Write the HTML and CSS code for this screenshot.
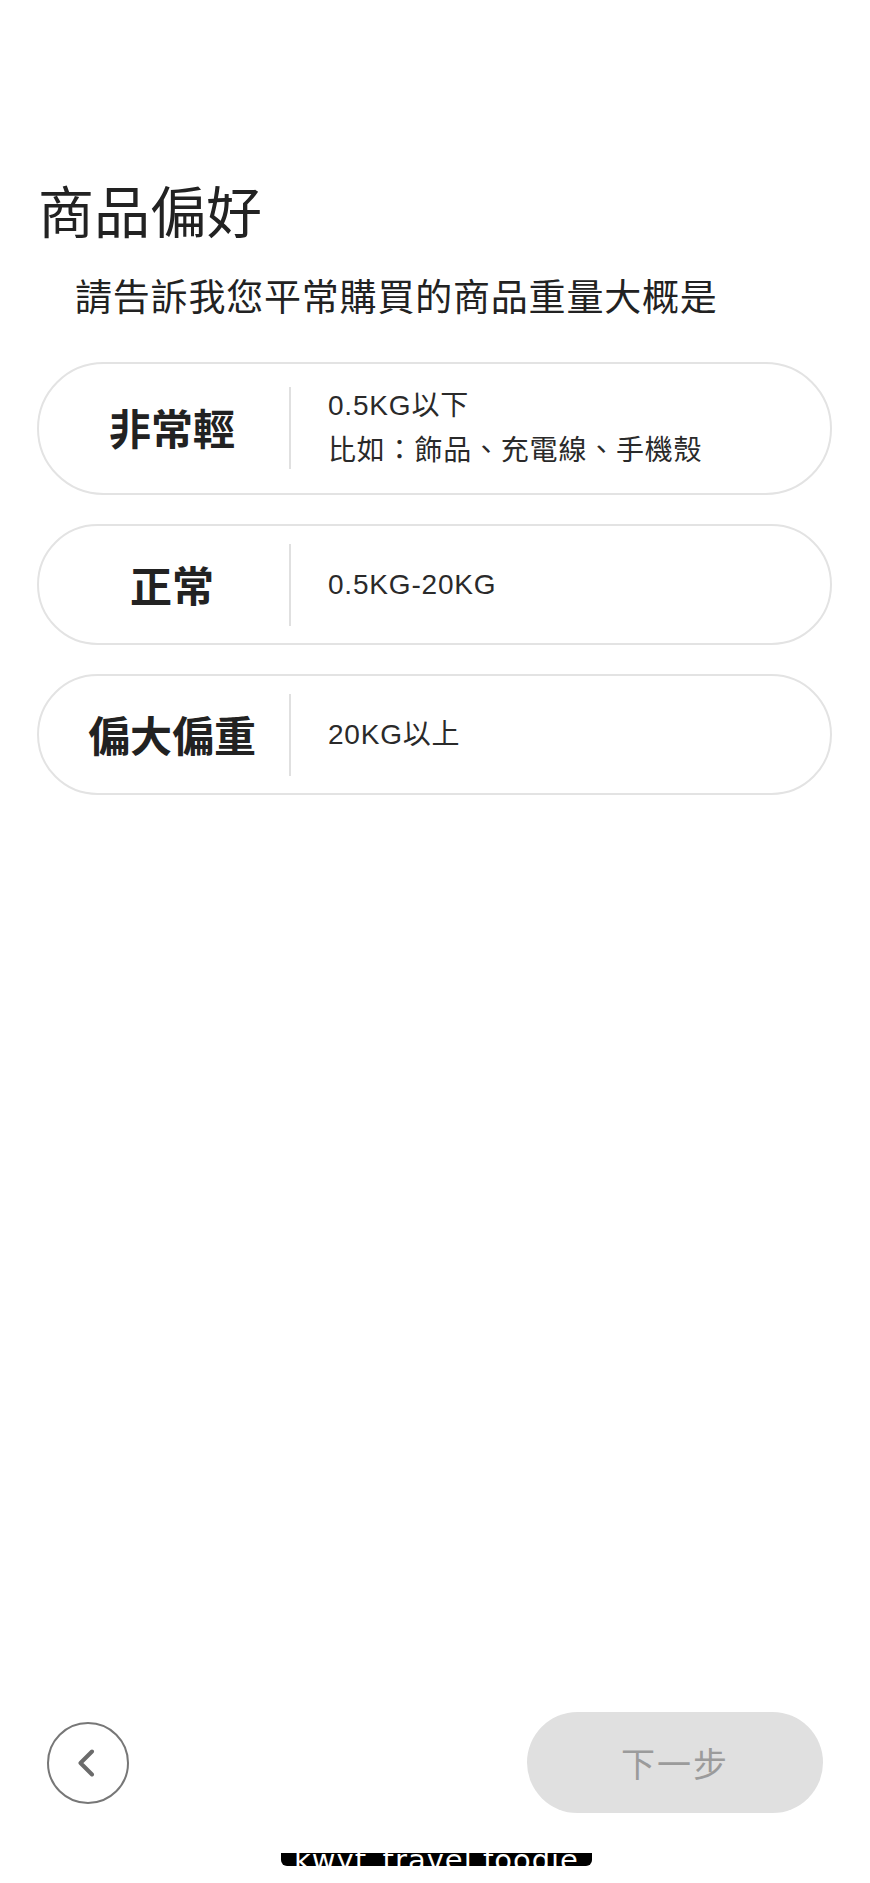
FILE: index.html
```
<!DOCTYPE html>
<html lang="zh-Hant">
<head>
<meta charset="utf-8">
<title>商品偏好</title>
<link rel="stylesheet" href="styles.css">
</head>
<body>
<div class="page">
  <main class="content">
    <h1 class="title">商品偏好</h1>
    <p class="subtitle">請告訴我您平常購買的商品重量大概是</p>
    <div class="options">
      <div class="option option-tall">
        <div class="label">非常輕</div>
        <div class="divider"></div>
        <div class="desc">
          <div>0.5KG以下</div>
          <div>比如：飾品、充電線、手機殼</div>
        </div>
      </div>
      <div class="option">
        <div class="label">正常</div>
        <div class="divider"></div>
        <div class="desc"><div>0.5KG-20KG</div></div>
      </div>
      <div class="option">
        <div class="label">偏大偏重</div>
        <div class="divider"></div>
        <div class="desc"><div>20KG以上</div></div>
      </div>
    </div>
  </main>
  <div class="bottom-bar">
    <button class="back-btn" aria-label="返回">
      <svg width="18" height="28" viewBox="0 0 18 28"><polyline points="15,2.5 3.5,14 15,25.5" fill="none" stroke="#6b6b6b" stroke-width="4" stroke-linecap="round" stroke-linejoin="round"/></svg>
    </button>
    <button class="next-btn">下一步</button>
  </div>
  <div class="watermark-row">
    <div class="watermark"><span>kwyt_travel.foodie</span></div>
  </div>
</div>
</body>
</html>
```
FILE: styles.css
```
* { box-sizing: border-box; }
html, body { margin: 0; padding: 0; background: #fff; }
body {
  font-family: "Liberation Sans", "Noto Sans CJK TC", sans-serif;
  color: #222;
}
.page {
  height: 1883px;
  display: flex;
  flex-direction: column;
}
.content {
  padding: 0 38px 0 37px;
}
.title {
  margin: 176px 0 0 1px;
  font-family: "Noto Sans CJK TC", sans-serif;
  font-size: 56px;
  line-height: 66px;
  font-weight: 400;
  color: #222;
}
.subtitle {
  margin: 29px 0 0 38px;
  font-family: "Noto Sans CJK TC", sans-serif;
  font-size: 37px;
  letter-spacing: 0.8px;
  line-height: 48px;
  font-weight: 400;
  color: #222;
}
.options {
  margin-top: 43px;
  display: flex;
  flex-direction: column;
  gap: 29px;
}
.option {
  display: flex;
  align-items: center;
  min-height: 121px;
  border: 2px solid #e3e3e3;
  border-radius: 70px;
  padding: 0 0 0 16px;
  background: #fff;
}
.option-tall {
  padding-top: 19px;
  padding-bottom: 20px;
}
.label {
  width: 234px;
  text-align: center;
  font-family: "Noto Sans CJK TC", sans-serif;
  font-weight: 700;
  font-size: 42px;
  color: #222;
  margin-top: -3px;
}
.divider {
  width: 2px;
  height: 82px;
  background: #e0e0e0;
  flex: none;
}
.desc {
  margin-left: 37px;
  font-size: 28px;
  letter-spacing: 0.8px;
  line-height: 45px;
  color: #2a2a2a;
}
.bottom-bar {
  margin-top: auto;
  display: flex;
  align-items: center;
  justify-content: space-between;
  padding: 0 47px;
  height: 101px;
}
.back-btn {
  width: 82px;
  height: 82px;
  border: 2.5px solid #777;
  border-radius: 50%;
  background: #fff;
  display: flex;
  align-items: center;
  justify-content: center;
  padding: 0 4px 0 0;
  margin: 0;
}
.next-btn {
  width: 296px;
  height: 101px;
  border: none;
  border-radius: 51px;
  background: #e0e0e0;
  color: #9b9b9b;
  font-family: "Noto Sans CJK TC", sans-serif;
  font-size: 34px;
  letter-spacing: 2px;
  padding: 0;
  margin: 0;
}
.watermark-row {
  display: flex;
  justify-content: center;
  padding: 40px 0 17px 3px;
}
.watermark {
  width: 311px;
  height: 13px;
  background: #000;
  border-radius: 0 0 6px 6px;
  overflow: hidden;
  display: flex;
  justify-content: center;
}
.watermark span {
  font-family: "DejaVu Sans", sans-serif;
  font-size: 29px;
  line-height: 13px;
  letter-spacing: 1px;
  color: #fff;
  white-space: nowrap;
  transform: translateY(1px);
}
```
